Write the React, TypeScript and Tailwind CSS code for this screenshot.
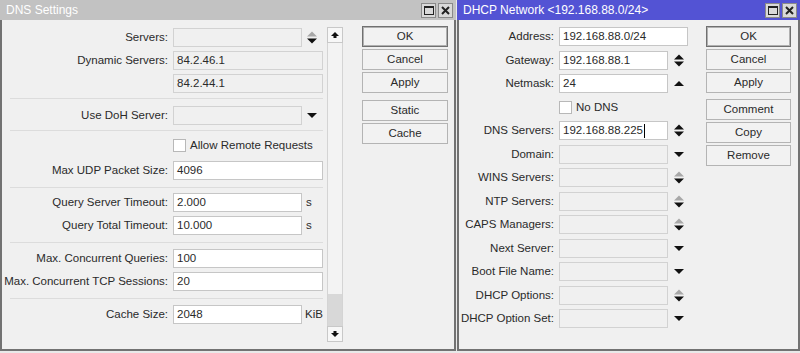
import React from "react";

const font = { fontFamily: '"Liberation Sans", Arial, sans-serif' };

function TitleButtons() {
  return (
    <div className="flex gap-[2px] mr-[3px]">
      <div className="w-[15px] h-[15px] bg-[#d9d9d9] border border-[#8a8a8a] flex items-center justify-center">
        <svg width="10" height="9" viewBox="0 0 10 9">
          <rect x="0.5" y="0.5" width="9" height="8" fill="none" stroke="#222" strokeWidth="1" />
          <rect x="0" y="0" width="10" height="2" fill="#222" />
        </svg>
      </div>
      <div className="w-[15px] h-[15px] bg-[#d9d9d9] border border-[#8a8a8a] flex items-center justify-center">
        <svg width="9" height="9" viewBox="0 0 9 9">
          <path d="M1 1 L8 8 M8 1 L1 8" stroke="#222" strokeWidth="2" />
        </svg>
      </div>
    </div>
  );
}

function Spin({ up = "#111", down = "#111" }: { up?: string; down?: string }) {
  return (
    <svg width="12" height="13" viewBox="0 0 12 13" className="shrink-0">
      <polygon points="1,5.5 6,0.5 11,5.5" fill={up} />
      <polygon points="1,7.5 11,7.5 6,12.5" fill={down} />
    </svg>
  );
}

function Down() {
  return (
    <svg width="12" height="13" viewBox="0 0 12 13" className="shrink-0">
      <polygon points="1,4 11,4 6,9" fill="#111" />
    </svg>
  );
}

function Up() {
  return (
    <svg width="12" height="13" viewBox="0 0 12 13" className="shrink-0">
      <polygon points="1,9 11,9 6,4" fill="#111" />
    </svg>
  );
}

function Field({ v = "", w, off, cursor }: { v?: string; w: string; off?: boolean; cursor?: boolean }) {
  return (
    <div
      className={`${w} h-[19px] shrink-0 border px-[3px] leading-[17px] whitespace-nowrap ${
        off ? "bg-[#f0f0f0] border-[#d2d2d2]" : "bg-white border-[#c6c6c6]"
      }`}
    >
      {v}
      {cursor && <span className="inline-block w-px h-[14px] bg-black align-middle ml-px" />}
    </div>
  );
}

function LRow({ label, children }: { label?: string; children: React.ReactNode }) {
  return (
    <div className="flex items-center h-[23px] gap-[5px]">
      <span className="w-[166px] shrink-0 text-right whitespace-nowrap">{label}</span>
      {children}
    </div>
  );
}

function RRow({ label, children }: { label?: string; children: React.ReactNode }) {
  return (
    <div className="flex items-center h-[23.5px] gap-[5px]">
      <span className="w-[95px] shrink-0 text-right whitespace-nowrap">{label}</span>
      {children}
    </div>
  );
}

function Check({ label }: { label: string }) {
  return (
    <div className="flex items-center gap-[4px]">
      <div className="w-[13px] h-[13px] bg-white border border-[#b8b8b8]" />
      <span>{label}</span>
    </div>
  );
}

function Btn({ children, def, className = "" }: { children: React.ReactNode; def?: boolean; className?: string }) {
  return (
    <div
      className={`h-[21px] flex items-center justify-center border bg-[#f2f2f2] ${
        def ? "border-[#707070] shadow-[inset_0_0_0_1px_#b0b0b0]" : "border-[#b4b4b4]"
      } ${className}`}
    >
      {children}
    </div>
  );
}

function Sep({ className }: { className: string }) {
  return <div className={`h-px ml-[8px] w-[313px] bg-[#dcdcdc] ${className}`} />;
}

function ScrollArrow({ up }: { up?: boolean }) {
  return (
    <div className="h-[16px] border border-[#c8c8c8] bg-[#f7f7f7] flex items-center justify-center">
      <svg width="8" height="8" viewBox="0 0 8 8" style={{ transform: up ? "none" : "rotate(180deg)" }}>
        <polygon points="0,5 4,1 8,5" fill="#111" />
        <rect x="2.5" y="5" width="3" height="2" fill="#111" />
      </svg>
    </div>
  );
}

function DnsWindow() {
  return (
    <div className="w-[456px] h-[351px] flex flex-col border-x-2 border-b-2 border-[#727272]">
      <div className="h-[20px] bg-[#c2c2c2] flex items-center justify-between -mx-[2px] pl-[6px]">
        <span className="text-white text-[12px]">DNS Settings</span>
        <TitleButtons />
      </div>
      <div className="flex-1 bg-[#f0f0f0] flex pt-[6px]">
        <div className="w-[321px] flex flex-col">
          <LRow label="Servers:">
            <Field w="w-[129px]" off />
            <span className="ml-[-1px]">
              <Spin up="#a8a8a8" />
            </span>
          </LRow>
          <LRow label="Dynamic Servers:">
            <Field w="w-[150px]" off v="84.2.46.1" />
          </LRow>
          <LRow>
            <Field w="w-[150px]" off v="84.2.44.1" />
          </LRow>
          <Sep className="mt-[3px] mb-[5px]" />
          <LRow label="Use DoH Server:">
            <Field w="w-[129px]" off />
            <span className="ml-[-1px]">
              <Down />
            </span>
          </LRow>
          <Sep className="mt-[3px] mb-[3px]" />
          <LRow>
            <Check label="Allow Remote Requests" />
          </LRow>
          <div className="mt-[2px]">
            <LRow label="Max UDP Packet Size:">
              <Field w="w-[150px]" v="4096" />
            </LRow>
          </div>
          <Sep className="mt-[5px] mb-[3px]" />
          <LRow label="Query Server Timeout:">
            <Field w="w-[129px]" v="2.000" />
            <span className="-ml-[1px]">s</span>
          </LRow>
          <LRow label="Query Total Timeout:">
            <Field w="w-[129px]" v="10.000" />
            <span className="-ml-[1px]">s</span>
          </LRow>
          <Sep className="mt-[5px] mb-[4px]" />
          <LRow label="Max. Concurrent Queries:">
            <Field w="w-[150px]" v="100" />
          </LRow>
          <LRow label="Max. Concurrent TCP Sessions:">
            <Field w="w-[150px]" v="20" />
          </LRow>
          <Sep className="mt-[5px] mb-[4px]" />
          <LRow label="Cache Size:">
            <Field w="w-[129px]" v="2048" />
            <span className="-ml-[2px]">KiB</span>
          </LRow>
        </div>
        <div className="ml-[4px] mt-[1px] w-[16px] h-[315px] flex flex-col">
          <ScrollArrow up />
          <div className="flex-1 border-x border-[#d4d4d4] bg-[#f3f3f3] flex flex-col justify-end">
            <div className="h-[32px] bg-[#d8d8d8]" />
          </div>
          <ScrollArrow />
        </div>
        <div className="ml-[19px] w-[86px] flex flex-col gap-[2px]">
          <Btn def>OK</Btn>
          <Btn>Cancel</Btn>
          <Btn>Apply</Btn>
          <Btn className="mt-[5px]">Static</Btn>
          <Btn>Cache</Btn>
        </div>
      </div>
    </div>
  );
}

function DhcpWindow() {
  return (
    <div className="w-[343px] h-[351px] flex flex-col border-x-2 border-b-2 border-[#727272]">
      <div className="h-[20px] bg-[#5353d4] flex items-center justify-between -mx-[2px] pl-[6px]">
        <span className="text-white text-[12px]">DHCP Network &lt;192.168.88.0/24&gt;</span>
        <TitleButtons />
      </div>
      <div className="flex-1 bg-[#f0f0f0] flex pt-[5px]">
        <div className="w-[240px] flex flex-col">
          <RRow label="Address:">
            <Field w="w-[129px]" v="192.168.88.0/24" />
          </RRow>
          <RRow label="Gateway:">
            <Field w="w-[109px]" v="192.168.88.1" />
            <Spin />
          </RRow>
          <RRow label="Netmask:">
            <Field w="w-[109px]" v="24" />
            <Up />
          </RRow>
          <RRow>
            <Check label="No DNS" />
          </RRow>
          <RRow label="DNS Servers:">
            <Field w="w-[109px]" v="192.168.88.225" cursor />
            <Spin />
          </RRow>
          <RRow label="Domain:">
            <Field w="w-[109px]" off />
            <Down />
          </RRow>
          <RRow label="WINS Servers:">
            <Field w="w-[109px]" off />
            <Spin up="#a8a8a8" />
          </RRow>
          <RRow label="NTP Servers:">
            <Field w="w-[109px]" off />
            <Spin up="#a8a8a8" />
          </RRow>
          <RRow label="CAPS Managers:">
            <Field w="w-[109px]" off />
            <Spin up="#a8a8a8" />
          </RRow>
          <RRow label="Next Server:">
            <Field w="w-[109px]" off />
            <Down />
          </RRow>
          <RRow label="Boot File Name:">
            <Field w="w-[109px]" off />
            <Down />
          </RRow>
          <RRow label="DHCP Options:">
            <Field w="w-[109px]" off />
            <Spin up="#a8a8a8" />
          </RRow>
          <RRow label="DHCP Option Set:">
            <Field w="w-[109px]" off />
            <Down />
          </RRow>
        </div>
        <div className="ml-[7px] mt-[1px] w-[85px] flex flex-col gap-[2px]">
          <Btn def>OK</Btn>
          <Btn>Cancel</Btn>
          <Btn>Apply</Btn>
          <Btn className="mt-[4px]">Comment</Btn>
          <Btn>Copy</Btn>
          <Btn>Remove</Btn>
        </div>
      </div>
    </div>
  );
}

export default function App() {
  return (
    <div className="w-[800px] h-[353px] bg-[#e9e9e9] flex gap-px text-[11.5px] text-[#2a2a2a]" style={font}>
      <DnsWindow />
      <DhcpWindow />
    </div>
  );
}
